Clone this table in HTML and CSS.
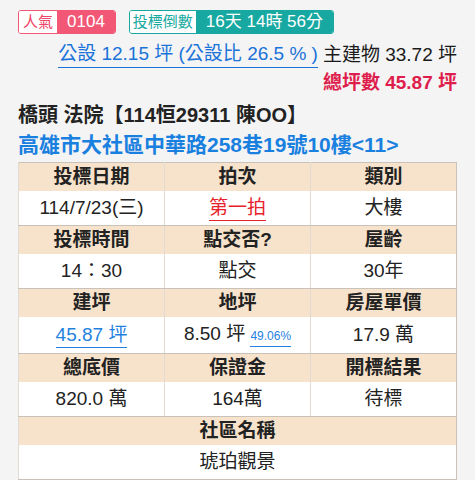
FILE: index.html
```html
<!DOCTYPE html>
<html lang="zh-Hant">
<head>
<meta charset="utf-8">
<link rel="stylesheet" href="styles.css">
</head>
<body>
<div class="page">
  <div class="badges">
    <div class="badge badge-red"><span class="lbl">人氣</span><span class="val">0104</span></div>
    <div class="badge badge-teal"><span class="lbl">投標倒數</span><span class="val">16天 14時 56分</span></div>
  </div>
  <div class="area">
    <a class="link">公設 12.15 坪 (公設比 26.5 % )</a>
    <span class="main">主建物 33.72 坪</span>
  </div>
  <div class="total">總坪數 45.87 坪</div>
  <div class="title">橋頭 法院【114恒29311 陳OO】</div>
  <div class="addr">高雄市大社區中華路258巷19號10樓&lt;11&gt;</div>
  <table class="info">
    <tr class="hd"><td>投標日期</td><td>拍次</td><td>類別</td></tr>
    <tr class="vl"><td>114/7/23(三)</td><td><span class="red-u">第一拍</span></td><td>大樓</td></tr>
    <tr class="hd"><td>投標時間</td><td>點交否?</td><td>屋齡</td></tr>
    <tr class="vl"><td>14：30</td><td>點交</td><td>30年</td></tr>
    <tr class="hd"><td>建坪</td><td>地坪</td><td>房屋單價</td></tr>
    <tr class="vl"><td><span class="blue-u">45.87 坪</span></td><td>8.50 坪 <span class="pct">49.06%</span></td><td>17.9 萬</td></tr>
    <tr class="hd"><td>總底價</td><td>保證金</td><td>開標結果</td></tr>
    <tr class="vl"><td>820.0 萬</td><td>164萬</td><td>待標</td></tr>
    <tr class="hd"><td colspan="3">社區名稱</td></tr>
    <tr class="vl"><td colspan="3">琥珀觀景</td></tr>
  </table>
</div>
</body>
</html>
```

FILE: styles.css
```css
html, body {
  margin: 0;
  padding: 0;
  background: #f4f4f4;
}
body {
  font-family: "Liberation Sans", "Noto Sans CJK TC", sans-serif;
  color: #222;
}
.page {
  padding: 10px 18px 0 18px;
}
.badges {
  display: flex;
  gap: 13px;
  height: 24px;
}
.badge {
  display: flex;
  border: 1px solid;
  border-radius: 3px;
  overflow: hidden;
}
.badge .lbl {
  background: #fff;
  font-size: 15px;
  line-height: 22px;
  padding: 0 3px;
}
.badge .val {
  color: #fff;
  font-size: 17px;
  line-height: 22px;
  padding: 0 10px;
}
.badge-red { border-color: #f25876; }
.badge-red .lbl { color: #ee4466; padding: 0 4px; }
.badge-red .val { background: #f25876; }
.badge-teal { border-color: #17a9a1; }
.badge-teal .lbl { color: #17a9a1; }
.badge-teal .val { background: #17a9a1; }
.area {
  margin-top: 7px;
  display: flex;
  justify-content: flex-end;
  gap: 5px;
  font-size: 19px;
  line-height: 28px;
}
.link {
  color: #1a73d9;
  border-bottom: 1px solid #1a73d9;
  line-height: 25px;
  height: 26px;
}
.main { color: #1a1a1a; }
.total {
  text-align: right;
  color: #de1d4c;
  font-weight: bold;
  font-size: 19px;
  line-height: 28px;
}
.title {
  margin-top: 3px;
  font-weight: bold;
  font-size: 20px;
  line-height: 30px;
  color: #222;
}
.addr {
  font-weight: bold;
  font-size: 21px;
  line-height: 30px;
  color: #1a80e0;
}
.info {
  margin-top: 2px;
  width: 100%;
  border-collapse: collapse;
  table-layout: fixed;
  background: #fff;
  border: 1px solid #c9c2ba;
}
.info td {
  text-align: center;
  font-size: 19px;
  padding: 0;
  border-left: 1px solid #e2dbd3;
}
.info tr.hd td {
  background: #f7e2cb;
  font-weight: bold;
  height: 28px;
  line-height: 28px;
  color: #222;
}
.info tr.vl td {
  height: 34px;
  line-height: 34px;
  background: #fff;
  border-bottom: 1px solid #c9c2ba;
}
.red-u {
  color: #e8222c;
  border-bottom: 1px solid #e8222c;
  padding-bottom: 2px;
}
.blue-u {
  color: #1f82e0;
  border-bottom: 1px solid #1f82e0;
  padding-bottom: 2px;
}
.pct {
  font-size: 12px;
  color: #1f82e0;
  border-bottom: 1px solid #1f82e0;
  padding-bottom: 3px;
}
```
